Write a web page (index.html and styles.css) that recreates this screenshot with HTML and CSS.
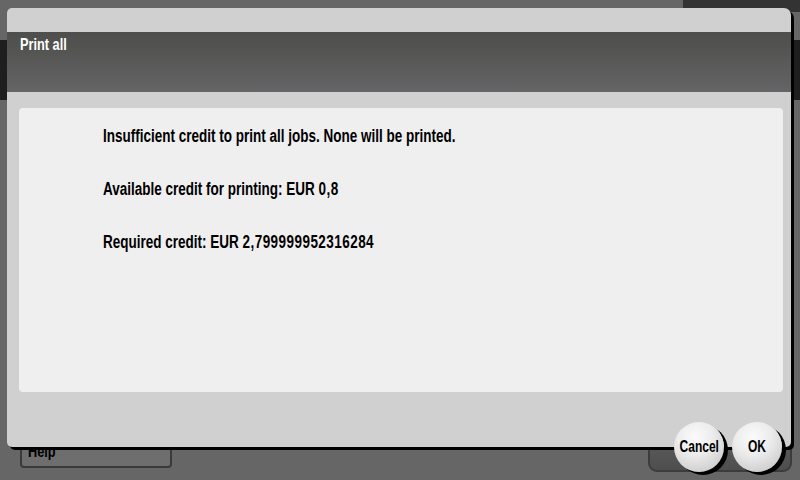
FILE: index.html
```html
<!DOCTYPE html>
<html>
<head>
<meta charset="utf-8">
<link rel="stylesheet" href="styles.css">
</head>
<body>
<div class="screen">
  <div class="topbar"><div class="topbar-box"></div></div>
  <div class="header"></div>
  <div class="screen-body"></div>
  <div class="bottom-row">
    <div class="help-btn"><span class="cond">Help</span></div>
    <div class="start-btn"></div>
  </div>
</div>

<div class="dialog">
  <div class="dialog-title"><span class="cond title-text">Print all</span></div>
  <div class="dialog-content">
    <div class="panel">
      <div class="msg"><span class="cond">Insufficient credit to print all jobs. None will be printed.</span></div>
      <div class="msg"><span class="cond">Available credit for printing: EUR <span class="num">0,8</span></span></div>
      <div class="msg"><span class="cond">Required credit: EUR <span class="num">2,799999952316284</span></span></div>
    </div>
  </div>
</div>

<div class="actions">
  <div class="round-btn"><span class="cond center">Cancel</span></div>
  <div class="round-btn"><span class="cond center">OK</span></div>
</div>
</body>
</html>
```

FILE: styles.css
```css
html, body {
  margin: 0;
  padding: 0;
}
body {
  width: 800px;
  height: 480px;
  overflow: hidden;
  position: relative;
  background: #666666;
  font-family: "Liberation Sans", Arial, sans-serif;
  font-weight: bold;
  color: #000;
}
.cond {
  display: inline-block;
  white-space: nowrap;
  transform: scaleX(0.75);
  transform-origin: left center;
}
.cond.center {
  transform-origin: center center;
}
.num {
  letter-spacing: 0.6px;
}

/* underlying screen */
.screen {
  height: 480px;
  display: flex;
  flex-direction: column;
}
.topbar {
  height: 40px;
  display: flex;
  justify-content: flex-end;
  background: #666666;
}
.topbar-box {
  width: 117px;
  height: 12px;
  background: #333333;
}
.header {
  height: 60px;
  background: #1e1e1e;
}
.screen-body {
  flex: 1;
}
.bottom-row {
  display: flex;
  align-items: flex-end;
  justify-content: space-between;
  padding: 0 8px 8px 20px;
}
.help-btn {
  width: 142px;
  height: 28px;
  margin-bottom: 4px;
  border: 2px solid #3a3a3a;
  border-radius: 4px;
  background: #6e6e6e;
  font-size: 17px;
  line-height: 28px;
  padding-left: 6px;
  box-sizing: content-box;
}
.start-btn {
  width: 140px;
  height: 38px;
  border: 2px solid #3c3c3c;
  border-radius: 9px;
  background: linear-gradient(#5e5e5e, #4e4e4e);
}

/* dialog */
.dialog {
  position: absolute;
  left: 7px;
  top: 8px;
  width: 784px;
  height: 439px;
  background: #d0d0d0;
  border-radius: 5px 7px 5px 5px;
  box-shadow: 3px 3px 0 #000;
  padding-top: 24px;
  box-sizing: border-box;
  display: flex;
  flex-direction: column;
}
.dialog-title {
  height: 60px;
  background: linear-gradient(#4e4f4d 0%, #555654 35%, #656466 100%);
  color: #ffffff;
  font-size: 17px;
  line-height: 20px;
  padding: 3px 0 0 13px;
  box-sizing: border-box;
}
.dialog-content {
  padding: 16px 8px 0 12px;
}
.panel {
  height: 284px;
  background: #efefef;
  border-radius: 4px;
  padding: 18px 0 0 84px;
  box-sizing: border-box;
  display: flex;
  flex-direction: column;
  gap: 33px;
}
.msg {
  font-size: 18px;
  line-height: 20px;
  height: 20px;
}

/* round action buttons overlapping the dialog edge */
.actions {
  position: absolute;
  left: 674px;
  top: 422px;
  display: flex;
  gap: 8px;
}
.round-btn {
  width: 50px;
  height: 50px;
  border-radius: 50%;
  background: radial-gradient(circle at 42% 30%, #fbfbfb 0%, #ececec 40%, #d2d2d2 75%, #b8b8b8 100%);
  box-shadow: 4px 3px 0 #000;
  display: flex;
  align-items: center;
  justify-content: center;
  font-size: 16px;
  line-height: 20px;
}
```
